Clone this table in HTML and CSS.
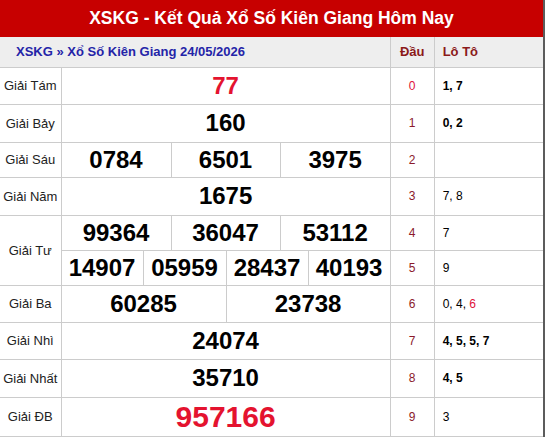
FILE: index.html
```html
<!DOCTYPE html>
<html lang="vi">
<head>
<meta charset="utf-8">
<title>XSKG - Kết Quả Xổ Số Kiên Giang Hôm Nay</title>
<link rel="stylesheet" href="styles.css">
</head>
<body>
<div class="frame">
  <h1 class="title">XSKG - Kết Quả Xổ Số Kiên Giang Hôm Nay</h1>
  <table class="kq">
    <colgroup>
      <col class="c-label">
      <col class="c27"><col class="c28"><col class="c27"><col class="c28">
      <col class="c27"><col class="c28"><col class="c27"><col class="c27">
      <col class="c28"><col class="c27"><col class="c28"><col class="c27">
      <col class="c-dau"><col class="c-loto">
    </colgroup>
    <thead>
      <tr class="r-head">
        <th colspan="13" class="crumb">XSKG » Xổ Số Kiên Giang 24/05/2026</th>
        <th class="dau-h">Đầu</th>
        <th class="loto-h">Lô Tô</th>
      </tr>
    </thead>
    <tbody>
      <tr class="h37">
        <td class="lbl">Giải Tám</td>
        <td colspan="12" class="num red">77</td>
        <td class="dau hot">0</td><td class="loto b">1, 7</td>
      </tr>
      <tr class="h38">
        <td class="lbl">Giải Bảy</td>
        <td colspan="12" class="num">160</td>
        <td class="dau">1</td><td class="loto b">0, 2</td>
      </tr>
      <tr class="h35">
        <td class="lbl">Giải Sáu</td>
        <td colspan="4" class="num">0784</td>
        <td colspan="4" class="num">6501</td>
        <td colspan="4" class="num">3975</td>
        <td class="dau">2</td><td class="loto"></td>
      </tr>
      <tr class="h38">
        <td class="lbl">Giải Năm</td>
        <td colspan="12" class="num">1675</td>
        <td class="dau">3</td><td class="loto">7, 8</td>
      </tr>
      <tr class="h35">
        <td class="lbl" rowspan="2">Giải Tư</td>
        <td colspan="4" class="num">99364</td>
        <td colspan="4" class="num">36047</td>
        <td colspan="4" class="num">53112</td>
        <td class="dau">4</td><td class="loto">7</td>
      </tr>
      <tr class="h35">
        <td colspan="3" class="num">14907</td>
        <td colspan="3" class="num">05959</td>
        <td colspan="3" class="num">28437</td>
        <td colspan="3" class="num">40193</td>
        <td class="dau">5</td><td class="loto">9</td>
      </tr>
      <tr class="h37">
        <td class="lbl">Giải Ba</td>
        <td colspan="6" class="num">60285</td>
        <td colspan="6" class="num">23738</td>
        <td class="dau">6</td><td class="loto">0, 4, <span class="hit">6</span></td>
      </tr>
      <tr class="h37">
        <td class="lbl">Giải Nhì</td>
        <td colspan="12" class="num">24074</td>
        <td class="dau">7</td><td class="loto b">4, 5, 5, 7</td>
      </tr>
      <tr class="h38">
        <td class="lbl">Giải Nhất</td>
        <td colspan="12" class="num">35710</td>
        <td class="dau">8</td><td class="loto b">4, 5</td>
      </tr>
      <tr class="h39">
        <td class="lbl">Giải ĐB</td>
        <td colspan="12" class="num db">957166</td>
        <td class="dau">9</td><td class="loto">3</td>
      </tr>
    </tbody>
  </table>
</div>
</body>
</html>
```

FILE: styles.css
```css
* { box-sizing: border-box; }

body {
  margin: 0;
  background: #fff;
  font-family: "Liberation Sans", Arial, sans-serif;
  color: #000;
}

.frame {
  width: 545px;
  border-right: 2px solid #5c5c5c;
}

.title {
  margin: 0;
  height: 37px;
  line-height: 37px;
  background: #c70000;
  color: #fff;
  font-size: 17.5px;
  font-weight: bold;
  text-align: center;
}

.kq {
  width: 543px;
  border-collapse: collapse;
  table-layout: fixed;
}

.c-label { width: 61px; }
.c27 { width: 27px; }
.c28 { width: 28px; }
.c-dau { width: 44px; }
.c-loto { width: 109px; }

.kq td,
.kq th {
  border: 1px solid #cccccc;
  padding: 0;
  vertical-align: middle;
}

.kq tr > :first-child { border-left: none; }
.kq tr > :last-child { border-right: none; }
.kq thead th { border-top: none; }

.kq .r-head th {
  height: 30px;
  background: #eeeeee;
  font-size: 13px;
  font-weight: bold;
}

.kq .crumb {
  text-align: left;
  padding-left: 16px;
  color: #2424a8;
}

.kq .dau-h {
  text-align: center;
  color: #8b1a1a;
}

.kq .loto-h {
  text-align: left;
  padding-left: 8px;
  color: #8b1a1a;
}

.h35 { height: 35px; }
.h37 { height: 37px; }
.h38 { height: 38px; }
.h39 { height: 39px; }

.kq .lbl {
  text-align: center;
  font-size: 13px;
  color: #222;
}

.kq .num {
  text-align: center;
  font-size: 24px;
  font-weight: bold;
  color: #000;
}

.kq .num.red { color: #e4132f; }

.kq .num.db {
  font-size: 30px;
  color: #e4132f;
}

.kq .dau {
  text-align: center;
  font-size: 12px;
  color: #8b1a2b;
}

.kq .dau.hot { color: #e0103a; }

.kq .loto {
  padding-left: 8px;
  font-size: 12px;
  color: #000;
}

.kq .loto.b { font-weight: bold; }

.hit { color: #e0103a; }
```
